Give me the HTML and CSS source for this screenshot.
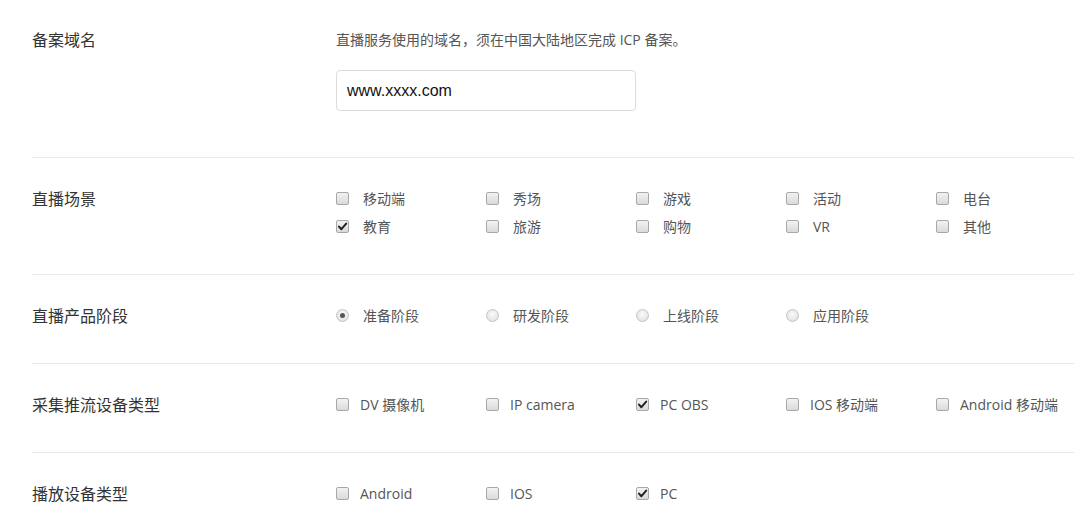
FILE: index.html
```html
<!DOCTYPE html>
<html lang="zh">
<head>
<meta charset="utf-8">
<title>直播</title>
<link rel="stylesheet" href="styles.css">
</head>
<body>
<div class="form">
  <div class="row row-first">
    <div class="label">备案域名</div>
    <div class="field">
      <div class="desc">直播服务使用的域名，须在中国大陆地区完成 ICP 备案。</div>
      <div class="input">www.xxxx.com</div>
    </div>
  </div>

  <div class="row">
    <div class="label">直播场景</div>
    <div class="field grid">
      <div class="opt"><span class="cb"></span><span>移动端</span></div>
      <div class="opt"><span class="cb"></span><span>秀场</span></div>
      <div class="opt"><span class="cb"></span><span>游戏</span></div>
      <div class="opt"><span class="cb"></span><span>活动</span></div>
      <div class="opt"><span class="cb"></span><span>电台</span></div>
      <div class="opt"><span class="cb checked"><svg viewBox="0 0 13 13"><path d="M3 6.6 L5.4 9.2 L10.2 3.6" /></svg></span><span>教育</span></div>
      <div class="opt"><span class="cb"></span><span>旅游</span></div>
      <div class="opt"><span class="cb"></span><span>购物</span></div>
      <div class="opt"><span class="cb"></span><span>VR</span></div>
      <div class="opt"><span class="cb"></span><span>其他</span></div>
    </div>
  </div>

  <div class="row">
    <div class="label">直播产品阶段</div>
    <div class="field grid">
      <div class="opt"><span class="rd selected"></span><span>准备阶段</span></div>
      <div class="opt"><span class="rd"></span><span>研发阶段</span></div>
      <div class="opt"><span class="rd"></span><span>上线阶段</span></div>
      <div class="opt"><span class="rd"></span><span>应用阶段</span></div>
    </div>
  </div>

  <div class="row">
    <div class="label">采集推流设备类型</div>
    <div class="field grid">
      <div class="opt"><span class="cb"></span><span class="en">DV 摄像机</span></div>
      <div class="opt"><span class="cb"></span><span class="en">IP camera</span></div>
      <div class="opt"><span class="cb checked"><svg viewBox="0 0 13 13"><path d="M3 6.6 L5.4 9.2 L10.2 3.6" /></svg></span><span class="en">PC OBS</span></div>
      <div class="opt"><span class="cb"></span><span class="en">IOS 移动端</span></div>
      <div class="opt"><span class="cb"></span><span class="en">Android 移动端</span></div>
    </div>
  </div>

  <div class="row">
    <div class="label">播放设备类型</div>
    <div class="field grid">
      <div class="opt"><span class="cb"></span><span class="en">Android</span></div>
      <div class="opt"><span class="cb"></span><span class="en">IOS</span></div>
      <div class="opt"><span class="cb checked"><svg viewBox="0 0 13 13"><path d="M3 6.6 L5.4 9.2 L10.2 3.6" /></svg></span><span class="en">PC</span></div>
    </div>
  </div>
</div>
</body>
</html>
```

FILE: styles.css
```css
html, body {
  margin: 0;
  padding: 0;
  background: #fff;
}
body {
  font-family: "Open Sans", "Noto Sans CJK SC", sans-serif;
  color: #333;
}
.form {
  margin-left: 32px;
}
.row {
  display: flex;
  padding: 31px 0 37px;
  border-bottom: 1px solid #e9e9e9;
}
.row-first {
  padding: 30px 0 46px;
}
.label {
  width: 304px;
  flex: none;
  font-size: 16px;
  line-height: 20px;
  color: #333;
}
.field {
  flex: 1;
}
.desc {
  font-size: 14px;
  line-height: 20px;
  color: #555;
}
.input {
  margin-top: 20px;
  width: 288px;
  height: 39px;
  padding-left: 10px;
  border: 1px solid #dcdcdc;
  border-radius: 4px;
  font-family: "Liberation Sans", sans-serif;
  font-size: 16px;
  line-height: 39px;
  color: #111;
}
.grid {
  display: grid;
  grid-template-columns: repeat(5, 150px);
  row-gap: 8px;
}
.opt {
  display: flex;
  align-items: center;
  height: 20px;
  font-size: 14px;
  line-height: 20px;
  color: #555;
}
.opt .en {
  margin-left: -3px;
}
.cb {
  width: 11px;
  height: 11px;
  flex: none;
  margin-right: 14px;
  margin-top: -2px;
  border: 1px solid #a8a8a8;
  border-radius: 2px;
  background: linear-gradient(#f2f2f2, #dadada);
  position: relative;
}
.cb svg {
  position: absolute;
  left: -1px;
  top: -1px;
  width: 13px;
  height: 13px;
}
.cb svg path {
  fill: none;
  stroke: #222;
  stroke-width: 2;
  stroke-linecap: round;
  stroke-linejoin: round;
}
.rd {
  width: 11px;
  height: 11px;
  flex: none;
  margin-right: 14px;
  margin-top: -2px;
  border: 1px solid #c4c4c4;
  border-radius: 50%;
  background: radial-gradient(circle at 50% 40%, #fafafa, #dcdcdc);
  position: relative;
}
.rd.selected::after {
  content: "";
  position: absolute;
  left: 3px;
  top: 3px;
  width: 5px;
  height: 5px;
  border-radius: 50%;
  background: #555;
}
```
